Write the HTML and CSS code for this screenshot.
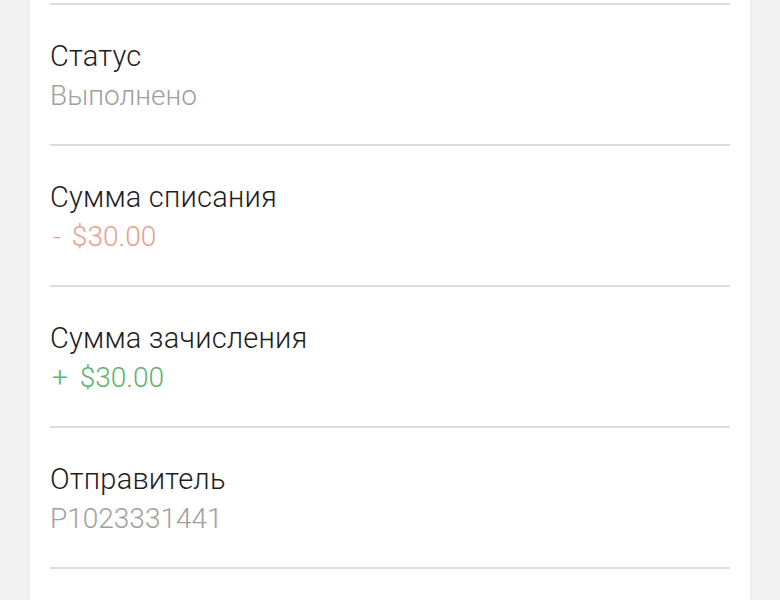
FILE: index.html
```
<!DOCTYPE html>
<html lang="ru">
<head>
<meta charset="utf-8">
<link rel="stylesheet" href="styles.css">
</head>
<body>
<div class="page">
  <div class="card">
    <div class="divider"></div>
    <div class="row">
      <div class="label">Статус</div>
      <div class="value">Выполнено</div>
    </div>
    <div class="divider"></div>
    <div class="row">
      <div class="label">Сумма списания</div>
      <div class="value debit">- $30.00</div>
    </div>
    <div class="divider"></div>
    <div class="row">
      <div class="label">Сумма зачисления</div>
      <div class="value credit">+ $30.00</div>
    </div>
    <div class="divider"></div>
    <div class="row">
      <div class="label">Отправитель</div>
      <div class="value">P1023331441</div>
    </div>
    <div class="divider"></div>
  </div>
</div>
</body>
</html>
```
FILE: styles.css
```
html, body {
  margin: 0;
  padding: 0;
  background: #f3f3f3;
  font-family: Roboto, "Noto Sans", sans-serif;
  height: 600px;
  overflow: hidden;
}
.page {
  padding: 0 30px;
}
.card {
  background: #ffffff;
  margin-top: -2px;
  padding: 5px 20px 0 20px;
  box-shadow: 0 0 3px rgba(0, 0, 0, 0.08);
  height: 700px;
}
.divider {
  height: 2px;
  background: #dcdcdc;
}
.row {
  padding: 31px 0 28px 0;
}
.label {
  font-size: 29px;
  font-weight: 300;
  line-height: 40px;
  letter-spacing: 0.2px;
  color: #1e1e1e;
}
.value {
  font-size: 28px;
  font-weight: 300;
  line-height: 40px;
  color: #a0a0a0;
}
.debit {
  color: #e6a28c;
  word-spacing: 4px;
  padding-left: 3px;
}
.credit {
  color: #5cb36f;
  word-spacing: 5px;
  padding-left: 2px;
}
```
